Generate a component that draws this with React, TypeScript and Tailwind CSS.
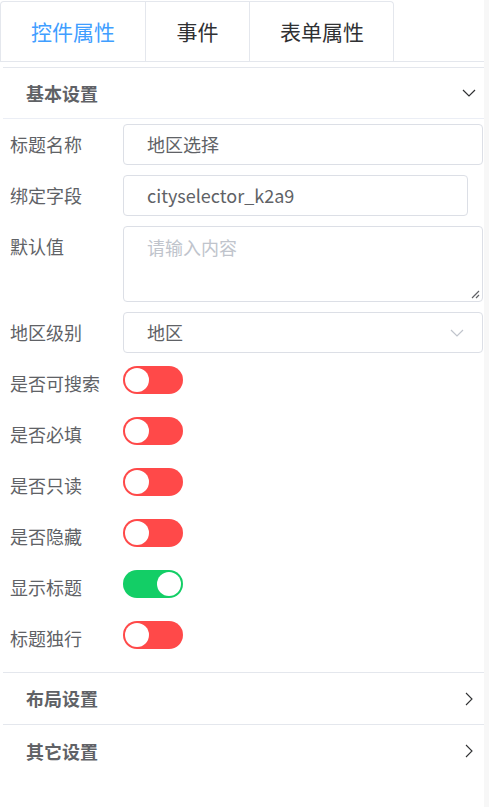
import React from 'react'

const font = { fontFamily: '"Noto Sans CJK SC", "Noto Sans", sans-serif' }

function ChevronDown({ className = '' }: { className?: string }) {
  return (
    <svg width="14" height="8" viewBox="0 0 14 8" fill="none" className={className}>
      <path d="M1 1l6 6 6-6" stroke="currentColor" strokeWidth="1.2" />
    </svg>
  )
}

function ChevronRight() {
  return (
    <svg width="8" height="14" viewBox="0 0 8 14" fill="none" className="text-[#303133]">
      <path d="M1 1l6 6-6 6" stroke="currentColor" strokeWidth="1.1" />
    </svg>
  )
}

function Switch({ on }: { on: boolean }) {
  return (
    <div className={`relative h-[28px] w-[60px] rounded-full ${on ? 'bg-[#13ce66]' : 'bg-[#ff4949]'}`}>
      <div className={`absolute top-[2px] h-[24px] w-[24px] rounded-full bg-white ${on ? 'right-[2px]' : 'left-[2px]'}`} />
    </div>
  )
}

function Row({ label, children }: { label: string; children: React.ReactNode }) {
  return (
    <div className="flex items-start mb-[10px]">
      <div className="w-[123px] shrink-0 pl-[10px] text-[18px] leading-[41px] text-[#606266] whitespace-nowrap">{label}</div>
      <div className="flex-1 min-w-0">{children}</div>
    </div>
  )
}

const switches: [string, boolean][] = [
  ['是否可搜索', false],
  ['是否必填', false],
  ['是否只读', false],
  ['是否隐藏', false],
  ['显示标题', true],
  ['标题独行', false],
]

export default function App() {
  return (
    <div className="flex h-[807px] w-[489px] bg-white" style={font}>
      <div className="w-[484px] shrink-0">
        {/* Tabs */}
        <div className="pt-[1px] border-b border-[#e4e7ed]">
          <div className="flex w-[394px] rounded-t-[4px] border border-b-0 border-[#e4e7ed] whitespace-nowrap">
            <div className="shrink-0 w-[144px] h-[59px] flex items-center justify-center text-[21px] text-[#409eff]">控件属性</div>
            <div className="shrink-0 w-[104px] h-[59px] flex items-center justify-center text-[21px] text-[#303133] border-l border-[#e4e7ed]">事件</div>
            <div className="shrink-0 w-[145px] h-[59px] flex items-center justify-center text-[21px] text-[#303133] border-l border-[#e4e7ed]">表单属性</div>
          </div>
        </div>

        {/* Collapse */}
        <div className="mt-[5px] ml-[3px] border-t border-[#e4e7ed]">
          <div className="flex h-[51px] items-center justify-between border-b border-[#ebeef5] pl-[23px] pr-[8px]">
            <span className="text-[18px] font-bold text-[#606266]">基本设置</span>
            <ChevronDown className="text-[#303133]" />
          </div>

          <div className="-ml-[3px] pt-[5px] pb-[3px] pr-[1px]">
            <Row label="标题名称">
              <div className="flex h-[41px] items-center rounded-[4px] border border-[#dcdfe6] pl-[23px] text-[18px] text-[#606266]">地区选择</div>
            </Row>
            <Row label="绑定字段">
              <div className="mr-[15px] flex h-[41px] items-center rounded-[4px] border border-[#dcdfe6] pl-[23px] text-[18px] text-[#606266]">cityselector_k2a9</div>
            </Row>
            <Row label="默认值">
              <div className="relative h-[76px] rounded-[4px] border border-[#dcdfe6] pl-[23px] pt-[7px] text-[18px] text-[#c0c4cc]">
                请输入内容
                <svg width="10" height="10" viewBox="0 0 10 10" className="absolute bottom-[2px] right-[2px] text-[#606266]">
                  <path d="M2 9L9 2M6 9L9 6" stroke="currentColor" strokeWidth="1.2" />
                </svg>
              </div>
            </Row>
            <Row label="地区级别">
              <div className="flex h-[41px] items-center justify-between rounded-[4px] border border-[#dcdfe6] pl-[23px] pr-[18px] text-[18px] text-[#606266]">
                地区
                <ChevronDown className="text-[#c0c4cc]" />
              </div>
            </Row>
            {switches.map(([label, on]) => (
              <Row key={label} label={label}>
                <div className="h-[41px] pt-[3px]">
                  <Switch on={on} />
                </div>
              </Row>
            ))}
          </div>

          <div className="flex h-[52px] items-center justify-between border-t border-[#e4e7ed] pl-[23px] pr-[11px]">
            <span className="text-[18px] font-bold text-[#606266]">布局设置</span>
            <ChevronRight />
          </div>
          <div className="flex h-[53px] items-center justify-between border-t border-[#e4e7ed] pl-[23px] pr-[11px]">
            <span className="text-[18px] font-bold text-[#606266]">其它设置</span>
            <ChevronRight />
          </div>
        </div>
      </div>
      <div className="flex-1 bg-[#f7f7f7]" />
    </div>
  )
}
